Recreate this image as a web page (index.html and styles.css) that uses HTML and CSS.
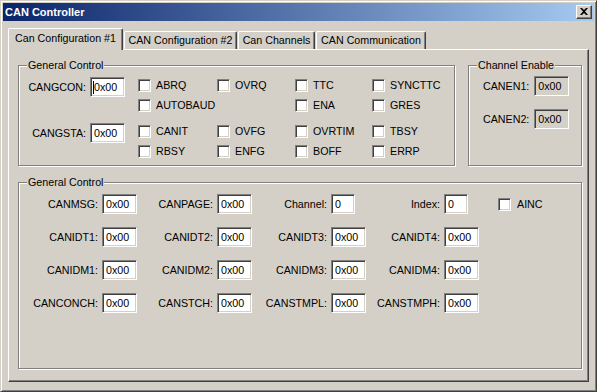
FILE: index.html
```html
<!DOCTYPE html>
<html lang="en">
<head>
    <meta charset="UTF-8">
    <title>CAN Controller</title>
    <link rel="stylesheet" href="styles.css">
</head>
<body>

    <div class="window">
        <div class="title-bar">
            <span class="title">CAN Controller</span>
            <div class="close-btn">
                <svg width="8" height="7" viewBox="0 0 8 7"><path d="M0 0h2l2 2 2-2h2L5 3.5 8 7H6L4 5 2 7H0l3-3.5z" fill="#000"/></svg>
            </div>
        </div>

        <div class="tabs">
            <div class="tab active" style="width:115px">Can Configuration #1</div>
            <div class="tab" style="width:113px">CAN Configuration #2</div>
            <div class="tab" style="width:77px">Can Channels</div>
            <div class="tab" style="width:110px">CAN Communication</div>
        </div>

        <div class="panel">
            <div class="top-row">
                <div class="group group-control">
                    <span class="legend">General Control</span>

                    <div class="reg-block">
                        <div class="reg-head">
                            <span class="reg-label">CANGCON:</span>
                            <div class="input"><span class="caret"></span>0x00</div>
                        </div>
                        <div class="check-grid">
                            <div class="check"><span class="cb"></span>ABRQ</div>
                            <div class="check"><span class="cb"></span>OVRQ</div>
                            <div class="check"><span class="cb"></span>TTC</div>
                            <div class="check"><span class="cb"></span>SYNCTTC</div>
                            <div class="check wide"><span class="cb"></span>AUTOBAUD</div>
                            <div class="check"><span class="cb"></span>ENA</div>
                            <div class="check"><span class="cb"></span>GRES</div>
                        </div>
                    </div>

                    <div class="reg-block">
                        <div class="reg-head">
                            <span class="reg-label">CANGSTA:</span>
                            <div class="input">0x00</div>
                        </div>
                        <div class="check-grid">
                            <div class="check"><span class="cb"></span>CANIT</div>
                            <div class="check"><span class="cb"></span>OVFG</div>
                            <div class="check"><span class="cb"></span>OVRTIM</div>
                            <div class="check"><span class="cb"></span>TBSY</div>
                            <div class="check"><span class="cb"></span>RBSY</div>
                            <div class="check"><span class="cb"></span>ENFG</div>
                            <div class="check"><span class="cb"></span>BOFF</div>
                            <div class="check"><span class="cb"></span>ERRP</div>
                        </div>
                    </div>
                </div>

                <div class="group group-enable">
                    <span class="legend">Channel Enable</span>
                    <div class="enable-row">
                        <span>CANEN1:</span>
                        <div class="input disabled">0x00</div>
                    </div>
                    <div class="enable-row">
                        <span>CANEN2:</span>
                        <div class="input disabled">0x00</div>
                    </div>
                </div>
            </div>

            <div class="group group-regs">
                <span class="legend">General Control</span>
                <div class="reg-grid">
                    <div class="field"><span>CANMSG:</span><div class="input">0x00</div></div>
                    <div class="field"><span>CANPAGE:</span><div class="input">0x00</div></div>
                    <div class="field"><span>Channel:</span><div class="input narrow">0</div></div>
                    <div class="field"><span>Index:</span><div class="input narrow">0</div></div>
                    <div class="check ainc"><span class="cb"></span>AINC</div>

                    <div class="field"><span>CANIDT1:</span><div class="input">0x00</div></div>
                    <div class="field"><span>CANIDT2:</span><div class="input">0x00</div></div>
                    <div class="field"><span>CANIDT3:</span><div class="input">0x00</div></div>
                    <div class="field"><span>CANIDT4:</span><div class="input">0x00</div></div>
                    <div></div>

                    <div class="field"><span>CANIDM1:</span><div class="input">0x00</div></div>
                    <div class="field"><span>CANIDM2:</span><div class="input">0x00</div></div>
                    <div class="field"><span>CANIDM3:</span><div class="input">0x00</div></div>
                    <div class="field"><span>CANIDM4:</span><div class="input">0x00</div></div>
                    <div></div>

                    <div class="field"><span>CANCONCH:</span><div class="input">0x00</div></div>
                    <div class="field"><span>CANSTCH:</span><div class="input">0x00</div></div>
                    <div class="field"><span>CANSTMPL:</span><div class="input">0x00</div></div>
                    <div class="field"><span>CANSTMPH:</span><div class="input">0x00</div></div>
                    <div></div>
                </div>
            </div>
        </div>
    </div>

</body>
</html>
```

FILE: styles.css
```css
body {
    margin: 0;
    font-family: "Liberation Sans", Arial, sans-serif;
    font-size: 10.7px;
    color: #000;
    background: #d4d0c8;
}
.window {
    width: 597px;
    height: 392px;
    box-sizing: border-box;
    background: #d4d0c8;
    border: 1px solid;
    border-color: #d4d0c8 #404040 #404040 #d4d0c8;
    box-shadow: inset 1px 1px #fff, inset -1px -1px #808080;
    padding: 2px;
    overflow: hidden;
}
.title-bar {
    height: 18px;
    background: linear-gradient(to right, #0a246a, #a6caf0);
    display: flex;
    align-items: center;
    justify-content: space-between;
    padding: 0 2px 0 2px;
}
.title {
    color: #fff;
    font-weight: bold;
    font-size: 11px;
}
.close-btn {
    width: 16px;
    height: 14px;
    box-sizing: border-box;
    background: #d4d0c8;
    border: 1px solid;
    border-color: #fff #404040 #404040 #fff;
    box-shadow: inset -1px -1px #808080;
    display: flex;
    align-items: center;
    justify-content: center;
}
.close-btn svg {
    display: block;
    margin: 0 1px 1px 0;
}
.tabs {
    display: flex;
    align-items: flex-end;
    height: 21px;
    margin-top: 7px;
    padding-left: 5px;
}
.tab {
    height: 18px;
    box-sizing: border-box;
    border: 1px solid;
    border-bottom: none;
    border-color: #fff #404040 #fff #fff;
    box-shadow: inset -1px 0 #808080;
    border-radius: 2px 2px 0 0;
    text-align: center;
    line-height: 17px;
    margin-left: 1px;
    white-space: nowrap;
}
.tab.active {
    height: 22px;
    margin-bottom: -1px;
    margin-left: 0;
    position: relative;
    z-index: 1;
    background: #d4d0c8;
    line-height: 18px;
}
.panel {
    width: 581px;
    height: 333px;
    margin-left: 5px;
    box-sizing: border-box;
    border: 1px solid;
    border-color: #fff #404040 #404040 #fff;
    box-shadow: inset -1px -1px #808080;
    padding: 15px 0 0 9px;
}
.top-row {
    display: flex;
    gap: 13px;
}
.group {
    position: relative;
    box-sizing: border-box;
    border: 1px solid #808080;
    box-shadow: 1px 1px 0 #fff, inset 1px 1px 0 #fff;
}
.legend {
    position: absolute;
    top: -7px;
    left: 8px;
    padding: 0 1px;
    background: #d4d0c8;
    line-height: 13px;
}
.group-control {
    width: 437px;
    height: 101px;
    padding: 9px 0 0 0;
}
.group-enable {
    width: 114px;
    height: 101px;
    padding: 10px 0 0 14px;
}
.group-regs {
    width: 564px;
    height: 187px;
    margin-top: 16px;
    padding-top: 11px;
}
.reg-block {
    display: flex;
    align-items: flex-start;
    margin-bottom: 6px;
}
.reg-head {
    display: flex;
    align-items: center;
    margin-top: 2px;
}
.reg-label {
    width: 67px;
    text-align: right;
    margin-right: 4px;
}
.check-grid {
    display: grid;
    grid-template-columns: 79px 78px 77px 77px;
    grid-auto-rows: 20px;
    margin-left: 13px;
}
.check-grid .wide {
    grid-column: span 2;
}
.check {
    display: flex;
    align-items: center;
    white-space: nowrap;
}
.cb {
    width: 13px;
    height: 13px;
    box-sizing: border-box;
    background: #fff;
    border: 1px solid;
    border-color: #808080 #fff #fff #808080;
    box-shadow: inset 1px 1px #404040, inset -1px -1px #d4d0c8;
    margin-right: 5px;
    flex: none;
}
.input {
    width: 35px;
    height: 20px;
    box-sizing: border-box;
    background: #fff;
    border: 1px solid;
    border-color: #808080 #fff #fff #808080;
    box-shadow: inset 1px 1px #404040, inset -1px -1px #d4d0c8;
    padding-left: 3px;
    line-height: 18px;
    display: flex;
    align-items: center;
}
.input.disabled {
    background: #d4d0c8;
}
.input.narrow {
    width: 24px;
}
.caret {
    width: 1px;
    height: 13px;
    background: #000;
    margin-left: -1px;
}
.enable-row {
    display: flex;
    align-items: center;
    gap: 5px;
    margin-bottom: 13px;
}
.reg-grid {
    display: grid;
    grid-template-columns: 118px 115px 114px 113px auto;
    grid-auto-rows: 20px;
    row-gap: 13px;
}
.field {
    display: grid;
    grid-template-columns: 1fr 35px;
    column-gap: 4px;
    align-items: center;
    white-space: nowrap;
}
.field span {
    text-align: right;
}
.ainc {
    margin-left: 19px;
}
.ainc .cb {
    margin-right: 6px;
}
```
